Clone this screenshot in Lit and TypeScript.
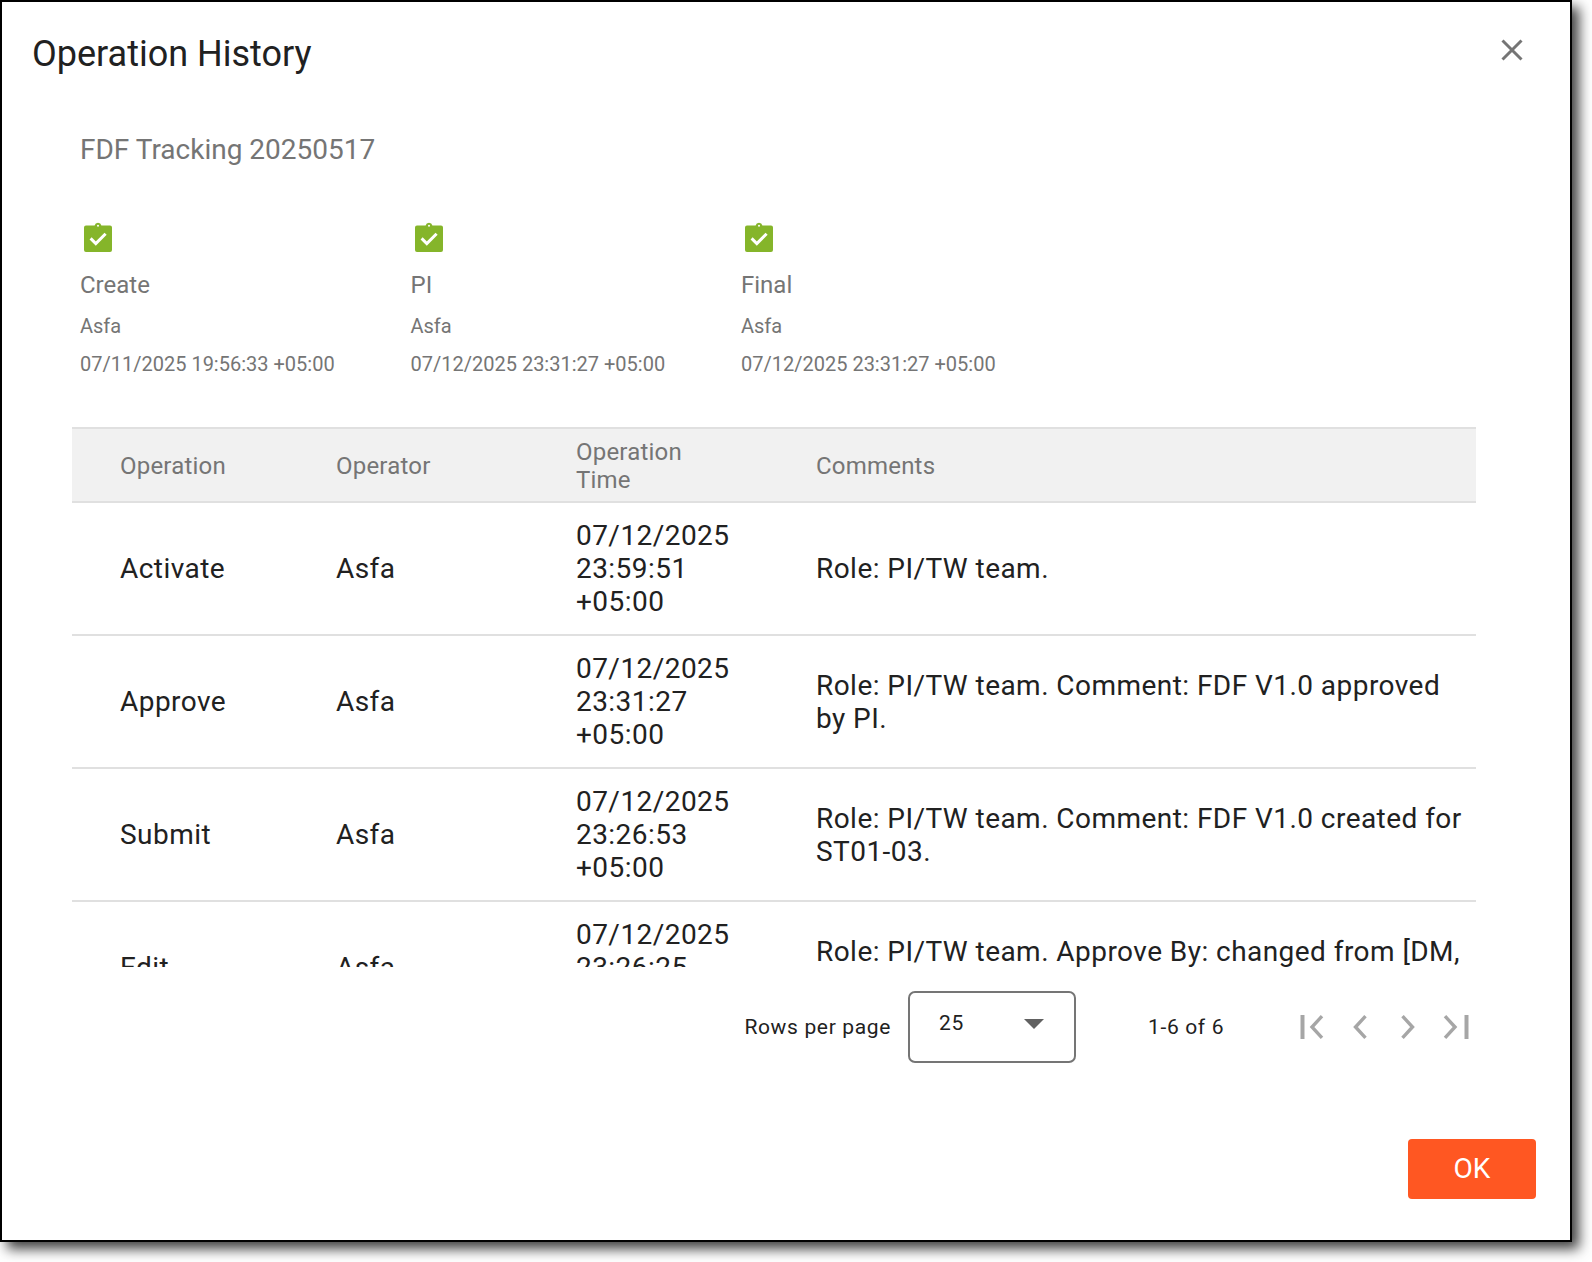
import { LitElement, html, css, svg } from 'lit';
import { customElement } from 'lit/decorators.js';

const steps = [
  { name: 'Create', who: 'Asfa', time: '07/11/2025 19:56:33 +05:00' },
  { name: 'PI', who: 'Asfa', time: '07/12/2025 23:31:27 +05:00' },
  { name: 'Final', who: 'Asfa', time: '07/12/2025 23:31:27 +05:00' },
];

const rows = [
  { op: 'Activate', who: 'Asfa', time: '07/12/2025 23:59:51 +05:00', comment: 'Role: PI/TW team.' },
  { op: 'Approve', who: 'Asfa', time: '07/12/2025 23:31:27 +05:00', comment: 'Role: PI/TW team. Comment: FDF V1.0 approved by PI.' },
  { op: 'Submit', who: 'Asfa', time: '07/12/2025 23:26:53 +05:00', comment: 'Role: PI/TW team. Comment: FDF V1.0 created for ST01-03.' },
  { op: 'Edit', who: 'Asfa', time: '07/12/2025 23:26:25 +05:00', comment: 'Role: PI/TW team. Approve By: changed from [DM, Asfa].' },
];

const clipboard = svg`<path fill="#85b52a" d="M2 3.5h8.6a3.5 3.5 0 0 1 6.8 0H26a2 2 0 0 1 2 2V28a2 2 0 0 1-2 2H2a2 2 0 0 1-2-2V5.5a2 2 0 0 1 2-2z"/>
  <circle cx="14" cy="3.8" r="1" fill="#fff"/>
  <path fill="none" stroke="#fff" stroke-width="3" d="M6.6 16.4l5.2 5.2 9.8-9.8"/>`;

@customElement('app-root')
export class AppRoot extends LitElement {
  static styles = css`
    :host {
      display: block;
      width: 1592px;
      height: 1262px;
      background: #fff;
      font-family: Roboto, sans-serif;
    }
    .dialog {
      box-sizing: border-box;
      width: 1572px;
      height: 1242px;
      border: 2px solid #000;
      background: #fff;
      box-shadow: 7px 7px 12px rgba(0, 0, 0, 0.75);
      display: flex;
      flex-direction: column;
    }
    .head {
      display: flex;
      justify-content: space-between;
      padding: 30px 45px 0 30px;
      height: 100px;
      box-sizing: border-box;
    }
    h1 {
      margin: 0;
      font-size: 36px;
      font-weight: 400;
      line-height: 44px;
      color: #212121;
    }
    .close {
      margin-top: 5px;
      width: 26px;
      height: 26px;
      color: #757575;
    }
    .body {
      padding: 30px 94px 0 70px;
    }
    .name {
      margin: 0 0 0 8px;
      font-size: 28px;
      line-height: 36px;
      color: #757575;
    }
    .steps {
      display: flex;
      margin: 54px 0 0 8px;
    }
    .step {
      width: 330.5px;
      color: #757575;
    }
    .step svg {
      display: block;
      width: 28px;
      height: 30px;
      margin-left: 4px;
    }
    .step .label {
      font-size: 24px;
      line-height: 32px;
      margin-top: 17px;
    }
    .step .who,
    .step .when {
      font-size: 20px;
      line-height: 28px;
    }
    .step .who {
      margin-top: 11px;
    }
    .step .when {
      margin-top: 10px;
    }
    .scroll {
      margin-top: 49px;
      height: 540px;
      overflow: hidden;
    }
    table {
      width: 1404px;
      border-collapse: collapse;
      table-layout: fixed;
    }
    th,
    td {
      box-sizing: border-box;
    }
    th {
      height: 74px;
      padding: 2px 16px 0 0;
      background: #f1f1f1;
      border-top: 2px solid #e0e0e0;
      border-bottom: 2px solid #e0e0e0;
      font-size: 24px;
      font-weight: 400;
      line-height: 28px;
      letter-spacing: 0.2px;
      color: #757575;
      text-align: left;
    }
    td {
      height: 133px;
      padding: 2px 14px 0 0;
      border-bottom: 2px solid #e0e0e0;
      font-size: 28px;
      line-height: 32.8px;
      letter-spacing: 0.45px;
      color: #212121;
    }
    .c1 {
      width: 264px;
      padding-left: 48px;
    }
    .c2 {
      width: 240px;
    }
    .c3 {
      width: 240px;
    }
    .time {
      width: 158px;
      display: block;
    }
    .pager {
      display: flex;
      align-items: center;
      justify-content: flex-end;
      margin-top: 24px;
      padding-right: 6.5px;
      color: #212121;
      font-size: 21px;
      letter-spacing: 0.65px;
    }
    .select {
      box-sizing: border-box;
      width: 168px;
      height: 72px;
      margin-left: 17px;
      border: 2px solid #757575;
      border-radius: 7px;
      display: flex;
      justify-content: space-between;
      padding: 18px 30px 0 29px;
    }
    .caret {
      width: 0;
      height: 0;
      margin-top: 8px;
      border-left: 10px solid transparent;
      border-right: 10px solid transparent;
      border-top: 10px solid #616161;
    }
    .count {
      margin-left: 72px;
      width: 149.5px;
    }
    .nav {
      display: flex;
      gap: 20px;
      color: #a6a6a6;
    }
    .nav svg {
      width: 28px;
      height: 28px;
      display: block;
    }
    .foot {
      margin-top: auto;
      padding: 0 34px 41px 0;
      display: flex;
      justify-content: flex-end;
    }
    button {
      width: 128px;
      height: 60px;
      padding: 0 0 2px;
      border: none;
      border-radius: 4px;
      background: #ff5722;
      color: #fff;
      font: 400 28px Roboto, sans-serif;
    }
  `;

  render() {
    return html`
      <div class="dialog">
        <div class="head">
          <h1>Operation History</h1>
          <svg class="close" viewBox="0 0 26 26">
            <path fill="none" stroke="currentColor" stroke-width="3" d="M3.5 3.5l19 19M22.5 3.5l-19 19" />
          </svg>
        </div>
        <div class="body">
          <p class="name">FDF Tracking 20250517</p>
          <div class="steps">
            ${steps.map(
              (s) => html`
                <div class="step">
                  <svg viewBox="0 0 28 30">${clipboard}</svg>
                  <div class="label">${s.name}</div>
                  <div class="who">${s.who}</div>
                  <div class="when">${s.time}</div>
                </div>
              `
            )}
          </div>
          <div class="scroll">
            <table>
              <thead>
                <tr>
                  <th class="c1">Operation</th>
                  <th class="c2">Operator</th>
                  <th class="c3"><span class="time">Operation Time</span></th>
                  <th>Comments</th>
                </tr>
              </thead>
              <tbody>
                ${rows.map(
                  (r) => html`
                    <tr>
                      <td class="c1">${r.op}</td>
                      <td class="c2">${r.who}</td>
                      <td class="c3"><span class="time">${r.time}</span></td>
                      <td>${r.comment}</td>
                    </tr>
                  `
                )}
              </tbody>
            </table>
          </div>
          <div class="pager">
            <span>Rows per page</span>
            <div class="select"><span>25</span><span class="caret"></span></div>
            <span class="count">1-6 of 6</span>
            <div class="nav">
              <svg viewBox="0 0 28 28"><path fill="currentColor" d="M2.5 2h4v24h-4z"/><path fill="none" stroke="currentColor" stroke-width="3.4" d="M24 3.2L14 14l10 10.8"/></svg>
              <svg viewBox="0 0 28 28"><path fill="none" stroke="currentColor" stroke-width="3.4" d="M19.5 3.2L9.5 14l10 10.8"/></svg>
              <svg viewBox="0 0 28 28"><path fill="none" stroke="currentColor" stroke-width="3.4" d="M8.5 3.2L18.5 14l-10 10.8"/></svg>
              <svg viewBox="0 0 28 28"><path fill="currentColor" d="M22.5 2h4v24h-4z"/><path fill="none" stroke="currentColor" stroke-width="3.4" d="M3 3.2L13 14 3 24.8"/></svg>
            </div>
          </div>
        </div>
        <div class="foot"><button>OK</button></div>
      </div>
    `;
  }
}
